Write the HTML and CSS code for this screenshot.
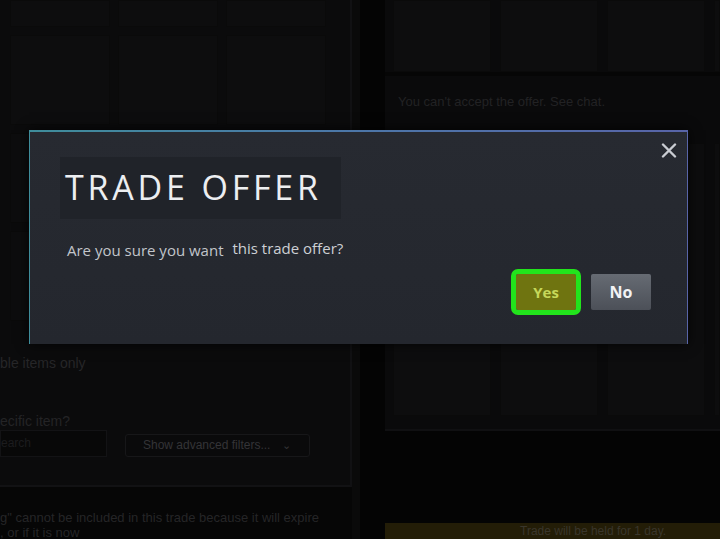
FILE: index.html
```html
<!DOCTYPE html>
<html lang="en">
<head>
    <meta charset="UTF-8">
    <meta name="viewport" content="width=device-width, initial-scale=1.0">
    <title>Trade Offer</title>
    <link rel="stylesheet" href="styles.css">
</head>
<body>
    <div class="page">
        <section class="inventory">
            <div class="filters-panel">
                <div class="slot-grid">
                    <div class="slot"></div><div class="slot"></div><div class="slot"></div>
                    <div class="slot"></div><div class="slot"></div><div class="slot"></div>
                    <div class="slot"></div><div class="slot"></div><div class="slot"></div>
                    <div class="slot"></div><div class="slot"></div><div class="slot"></div>
                </div>
                <div class="check-row">ble items only</div>
                <div class="search-label">ecific item?</div>
                <div class="filter-row">
                    <div class="search-box">earch</div>
                    <div class="adv-btn">Show advanced filters... <span class="chev">&#8964;</span></div>
                </div>
            </div>
            <p class="expire-note">
                g" cannot be included in this trade because it will expire<br>
                , or if it is now
            </p>
        </section>

        <section class="trade">
            <div class="trade-panel">
                <div class="slot-row">
                    <div class="slot"></div><div class="slot"></div><div class="slot"></div><div class="slot"></div>
                </div>
                <p class="trade-note">You can't accept the offer. See chat.</p>
                <div class="slot-row tall">
                    <div class="slot"></div><div class="slot"></div><div class="slot"></div><div class="slot"></div>
                </div>
            </div>
            <div class="hold-bar">Trade will be held for 1 day.</div>
        </section>
    </div>

    <div class="modal">
        <button class="modal-close" aria-label="Close">
            <svg width="16" height="15" viewBox="0 0 16 15">
                <path d="M2 1.5 L14 13.5 M14 1.5 L2 13.5" stroke="#c9ccd2" stroke-width="2.4" stroke-linecap="round"/>
            </svg>
        </button>
        <div class="modal-title">TRADE OFFER</div>
        <p class="modal-text">Are you sure you want <span class="raised">this trade offer?</span></p>
        <div class="modal-actions">
            <button class="btn btn-yes">Yes</button>
            <button class="btn btn-no">No</button>
        </div>
    </div>
</body>
</html>
```

FILE: styles.css
```css
html, body {
    margin: 0;
    padding: 0;
}
body {
    width: 720px;
    height: 539px;
    overflow: hidden;
    background: #060606;
    font-family: "Liberation Sans", Arial, sans-serif;
    position: relative;
}
.page {
    display: grid;
    grid-template-columns: 352px 368px;
    height: 539px;
    overflow: hidden;
}

/* left: inventory + filters */
.inventory {
    overflow: hidden;
}
.filters-panel {
    height: 487px;
    background: #0b0b0c;
    border-right: 2px solid #111113;
    border-bottom: 2px solid #121214;
    box-sizing: border-box;
}
.slot-grid {
    display: grid;
    grid-template-columns: repeat(3, 100px);
    grid-template-rows: 27px 90px 90px 90px;
    gap: 8px 8px;
    padding-left: 10px;
}
.slot {
    background: #0d0d0e;
    box-shadow: inset 0 0 0 1px #0a0a0a;
}
.check-row {
    margin-top: 33px;
    font-size: 14px;
    line-height: 18px;
    color: #262628;
}
.search-label {
    margin-top: 40px;
    font-size: 14px;
    line-height: 18px;
    color: #242426;
}
.filter-row {
    display: flex;
    align-items: flex-end;
    gap: 18px;
}
.search-box {
    width: 107px;
    height: 27px;
    box-sizing: border-box;
    background: #080808;
    border: 1px solid #131315;
    font-size: 12px;
    line-height: 25px;
    color: #1c1c1e;
    overflow: hidden;
}
.adv-btn {
    width: 185px;
    height: 23px;
    box-sizing: border-box;
    border: 1px solid #171719;
    border-radius: 3px;
    background: #0a0a0b;
    padding-left: 17px;
    font-size: 12px;
    line-height: 21px;
    color: #343437;
    white-space: nowrap;
}
.chev {
    margin-left: 8px;
    font-size: 11px;
}
.expire-note {
    margin: 23px 0 0;
    font-size: 13px;
    line-height: 15px;
    color: #252527;
    white-space: nowrap;
}

/* right: trade window */
.trade {
    display: flex;
    flex-direction: column;
    min-width: 0;
    overflow: hidden;
    padding-left: 25px;
    background: #040404;
    border-left: 8px solid #0a0a0a;
}
.trade-panel {
    height: 431px;
    background: #0a0a0b;
    border-bottom: 2px solid #101012;
    box-sizing: border-box;
    overflow: hidden;
}
.slot-row {
    display: grid;
    grid-template-columns: repeat(3, 98px) 1fr;
    gap: 9px;
    height: 72px;
    padding-left: 8px;
    border-bottom: 4px solid #060606;
}
.slot-row.tall {
    height: 273px;
    margin-top: 20px;
    border-bottom: none;
}
.trade-note {
    margin: 0;
    padding: 17px 0 0 13px;
    height: 30px;
    font-size: 13px;
    line-height: 18px;
    color: #222224;
}
.hold-bar {
    margin-top: auto;
    height: 16px;
    background: #231d07;
    padding-left: 135px;
    font-size: 12px;
    line-height: 17px;
    color: #3a362c;
    white-space: nowrap;
}

/* confirmation dialog over the page */
.modal {
    position: absolute;
    left: 29px;
    top: 130px;
    width: 659px;
    height: 214px;
    box-sizing: border-box;
    padding: 25px 36px 0 30px;
    background: linear-gradient(180deg, #272a31 0%, #24272e 100%);
    border-top: 2px solid #4a7f98;
    border-image: linear-gradient(90deg, #3f8d9b, #4c76a8 50%, #5864a8) 1;
    border-left: 1px solid #2b2e35;
    border-right: 1px solid #2b2e35;
    box-shadow: 0 0 12px rgba(0, 0, 0, 0.8);
    font-family: "Open Sans", "Noto Sans", sans-serif;
}
.modal-close {
    position: absolute;
    right: 10px;
    top: 11px;
    background: none;
    border: none;
    padding: 0;
}
.modal-close svg { display: block; }
.modal-title {
    width: 281px;
    height: 62px;
    box-sizing: border-box;
    padding-left: 5px;
    background: #202329;
    font-size: 34px;
    line-height: 60px;
    letter-spacing: 3.8px;
    color: #eceef1;
}
.modal-text {
    margin: 21px 0 0 7px;
    font-size: 15px;
    line-height: 20px;
    color: #c2c5cb;
}
.raised {
    position: relative;
    top: -2px;
    margin-left: 5px;
    color: #cdd0d5;
}
.modal-actions {
    display: flex;
    justify-content: flex-end;
    align-items: center;
    gap: 15px;
    margin-top: 14px;
}
.btn {
    width: 60px;
    height: 36px;
    border: none;
    border-radius: 2px;
    font-family: "Open Sans", "Noto Sans", sans-serif;
    font-size: 15px;
    font-weight: 700;
    padding: 0;
}
.btn-yes {
    background: #6f7410;
    color: #c6d85a;
    outline: 5px solid #22e41c;
    outline-offset: 0;
}
.btn-no {
    background: linear-gradient(180deg, #666b73 0%, #4c5058 100%);
    color: #f2f3f5;
    font-size: 16px;
}
```
